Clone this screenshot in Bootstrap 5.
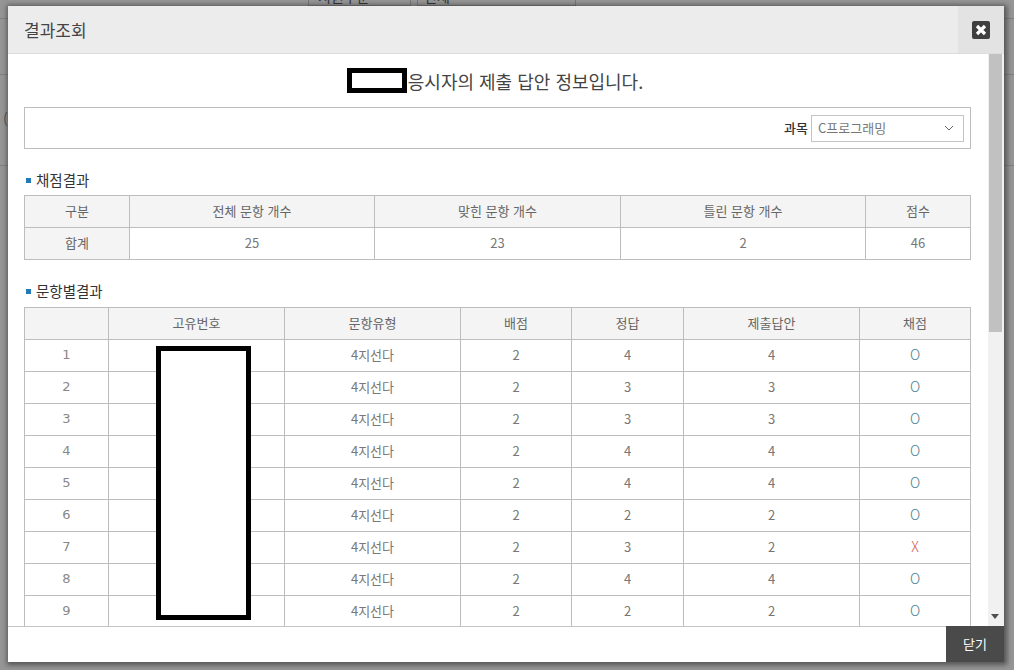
<!DOCTYPE html>
<html lang="ko">
<head>
  <meta charset="UTF-8" />
  <title>결과조회</title>
  <link href="https://cdn.jsdelivr.net/npm/bootstrap@5.3.3/dist/css/bootstrap.min.css" rel="stylesheet">
  <style>
    html, body { height: 100%; overflow: hidden; }
    body {
      background: #969696;
      font-family: "Noto Sans CJK KR", "Noto Sans", sans-serif;
      color: #555;
      font-size: 13px;
    }
    .bg-page { position: absolute; inset: 0; }
    .bg-line { position: absolute; left: 0; right: 0; height: 1px; background: #808080; }
    .bg-box { position: absolute; top: -12px; height: 18px; border: 1px solid #777; color: #333; font-size: 14px; line-height: 14px; }
    .bg-paren { position: absolute; left: 3px; top: 108px; font-size: 14px; color: #555; }

    .result-win {
      position: absolute; left: 8px; top: 6px; width: 996px; height: 656px;
      background: #fff; box-shadow: 1px 1px 5px 2px rgba(40,40,40,.6);
      display: flex; flex-direction: column;
    }
    .win-head {
      height: 48px; flex: none; background: #ececec; border-bottom: 1px solid #dcdcdc;
      display: flex; align-items: stretch; justify-content: space-between;
    }
    .win-title { font-size: 17px; color: #444; padding-left: 16px; line-height: 47px; }
    .win-x { width: 46px; background: #e3e3e3; display: flex; align-items: center; justify-content: center; border: 0; padding: 0; }
    .win-scroll { flex: 1; min-height: 0; overflow: hidden; display: flex; }
    .win-content { width: 980px; flex: none; padding-left: 16px; overflow: hidden; }
    .fake-bar { width: 16px; flex: none; background: #f1f1f1; position: relative; padding: 0 2px 0 1px; }
    .fake-thumb { height: 278px; background: #c1c1c1; }
    .fake-arrow { position: absolute; left: 3px; bottom: 7px; width: 0; height: 0; border: 4px solid transparent; border-top: 5px solid #505050; border-bottom: 0; }

    .notice { width: 942px; height: 53px; display: flex; align-items: center; justify-content: center; font-size: 18px; color: #444; }
    .notice-text { padding-top: 2px; }
    .mask-name { width: 60px; height: 25px; border: 5px solid #000; margin-right: 1px; background: #fff; }
    .filter-box { width: 947px; height: 42px; border: 1px solid #bdbdbd; display: flex; align-items: center; justify-content: flex-end; gap: 3px; padding-right: 6px; }
    .filter-label { font-weight: 500; color: #333; }
    .subject-sel {
      width: 153px; height: 27px; border: 1px solid #c4c4c4; color: #777;
      display: flex; align-items: center; justify-content: space-between; padding: 0 9px 0 6px;
    }
    .sec-title { font-size: 14.5px; color: #333; display: flex; align-items: center; gap: 5px; height: 20px; padding-left: 2px; margin-top: 21px; margin-bottom: 5px; }
    .sec-title::before { content: ""; width: 5px; height: 5px; background: #2279b5; }
    .sec-second { margin-top: 21px; margin-bottom: 6px; }

    .res-table { width: 946px; table-layout: fixed; border-collapse: collapse; margin: 0; }
    .res-table th, .res-table td {
      border: 1px solid #bdbdbd; height: 32px; padding: 0 0 2px; text-align: center; vertical-align: middle;
      font-size: 13px; font-weight: 400; color: #777;
    }
    .res-table thead th, .res-table .row-head { background: #f4f4f4; color: #666; }
    .res-table td.num { font-family: "DejaVu Sans", sans-serif; font-size: 13px; color: #888; }
    .res-table td.ok { color: #3f7f8f; font-size: 14px; font-weight: 300; }
    .res-table td.bad { color: #d0544c; font-size: 14px; font-weight: 300; }
    .table-wrap { position: relative; }
    .mask-id { position: absolute; left: 132px; top: 39px; width: 95px; height: 274px; border: 5px solid #000; background: #fff; }

    .win-foot { height: 36px; flex: none; border-top: 1px solid #c4c4c4; display: flex; justify-content: flex-end; }
    .close-btn { width: 58px; border: 0; border-radius: 0; background: #4a4a4a; color: #fff; font-size: 13px; padding: 0; margin-top: -1px; }
    .close-btn:hover { background: #4a4a4a; color: #fff; }
  </style>
</head>
<body>

<!-- 뒤쪽 페이지 -->
<div class="bg-page">
  <div class="bg-line" style="top:18px"></div>
  <div class="bg-line" style="top:74px"></div>
  <div class="bg-line" style="top:165px"></div>
  <div class="bg-box" style="left:308px;width:103px;padding-left:9px">지원구분</div>
  <div class="bg-box" style="left:417px;width:159px;padding-left:6px">전체</div>
  <div class="bg-paren">(</div>
</div>

<div class="result-win">
  <div class="win-head">
    <div class="win-title">결과조회</div>
    <button type="button" class="win-x" aria-label="닫기">
      <svg width="18" height="18" viewBox="0 0 18 18">
        <rect width="18" height="18" rx="2" fill="#3f3f3f"/>
        <path d="M5 5l8 8M13 5l-8 8" stroke="#fff" stroke-width="3.2"/>
      </svg>
    </button>
  </div>

  <div class="win-scroll">
    <div class="win-content">
      <div class="notice"><span class="mask-name"></span><span class="notice-text">응시자의 제출 답안 정보입니다.</span></div>

      <div class="filter-box">
        <span class="filter-label">과목</span>
        <div class="subject-sel">
          <span>C프로그래밍</span>
          <svg width="10" height="6" viewBox="0 0 10 6"><path d="M1 1l4 4 4-4" fill="none" stroke="#666" stroke-width="1"/></svg>
        </div>
      </div>

      <div class="sec-title"><span>채점결과</span></div>
      <table class="res-table">
        <colgroup><col style="width:105px"><col style="width:245px"><col style="width:246px"><col style="width:245px"><col style="width:105px"></colgroup>
        <thead><tr><th>구분</th><th>전체 문항 개수</th><th>맞힌 문항 개수</th><th>틀린 문항 개수</th><th>점수</th></tr></thead>
        <tbody><tr><td class="row-head">합계</td><td>25</td><td>23</td><td>2</td><td>46</td></tr></tbody>
      </table>

      <div class="sec-title sec-second"><span>문항별결과</span></div>
      <div class="table-wrap">
        <table class="res-table">
          <colgroup><col style="width:84px"><col style="width:176px"><col style="width:176px"><col style="width:111px"><col style="width:112px"><col style="width:176px"><col style="width:111px"></colgroup>
          <thead><tr><th></th><th>고유번호</th><th>문항유형</th><th>배점</th><th>정답</th><th>제출답안</th><th>채점</th></tr></thead>
          <tbody id="rows"></tbody>
        </table>
        <div class="mask-id"></div>
      </div>
    </div>
    <div class="fake-bar"><div class="fake-thumb"></div><div class="fake-arrow"></div></div>
  </div>

  <div class="win-foot">
    <button type="button" class="btn close-btn">닫기</button>
  </div>
</div>

<script>
  // 번호, 배점, 정답, 제출답안
  const data = [[1,2,4,4],[2,2,3,3],[3,2,3,3],[4,2,4,4],[5,2,4,4],[6,2,2,2],[7,2,3,2],[8,2,4,4],[9,2,2,2]];
  document.getElementById("rows").innerHTML = data.map(d => {
    const ok = d[2] === d[3];
    return `<tr><td class="num">${d[0]}</td><td></td><td>4지선다</td><td>${d[1]}</td><td>${d[2]}</td><td>${d[3]}</td><td class="${ok ? "ok" : "bad"}">${ok ? "O" : "X"}</td></tr>`;
  }).join("");
</script>
</body>
</html>
